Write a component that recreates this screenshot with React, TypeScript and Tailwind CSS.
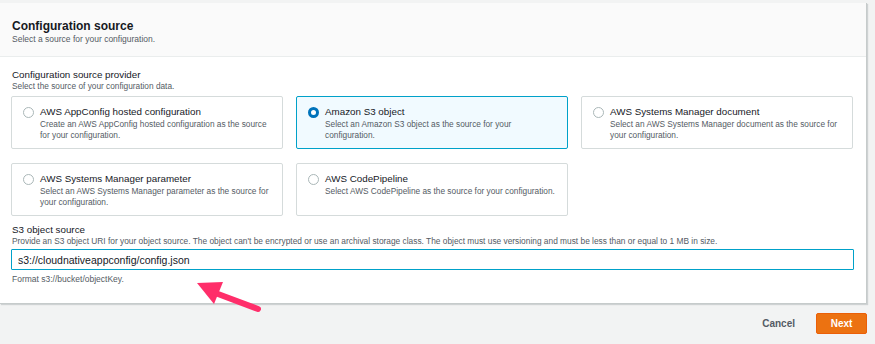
import React, { useState } from 'react';

const options = [
  { id: 'hosted', title: 'AWS AppConfig hosted configuration', desc: 'Create an AWS AppConfig hosted configuration as the source for your configuration.' },
  { id: 's3', title: 'Amazon S3 object', desc: 'Select an Amazon S3 object as the source for your configuration.' },
  { id: 'ssmdoc', title: 'AWS Systems Manager document', desc: 'Select an AWS Systems Manager document as the source for your configuration.' },
  { id: 'ssmparam', title: 'AWS Systems Manager parameter', desc: 'Select an AWS Systems Manager parameter as the source for your configuration.' },
  { id: 'pipeline', title: 'AWS CodePipeline', desc: 'Select AWS CodePipeline as the source for your configuration.' },
];

const App: React.FC = () => {
  const [selected, setSelected] = useState('s3');
  const [uri, setUri] = useState('s3://cloudnativeappconfig/config.json');

  return (
    <div className="relative w-[875px] h-[344px] overflow-hidden bg-[#f2f3f3] pt-[3px] font-['Liberation_Sans',Arial,sans-serif] text-[#16191f]">
      <div className="w-[867px] h-[301px] bg-white border-r border-b border-[#c6cbcb] shadow-[1px_1px_1px_rgba(0,28,36,0.15)]">
        <div className="h-[54px] bg-[#fafafa] border-b border-[#eaeded] px-[12px] pt-[16px]">
          <h1 className="text-[12px] leading-[14px] font-bold">Configuration source</h1>
          <p className="text-[8.5px] leading-[12px] text-[#545b64]">Select a source for your configuration.</p>
        </div>

        <div className="px-[11px] pt-[12px]">
          <div className="px-[1px] text-[9.8px] leading-[12px]">Configuration source provider</div>
          <div className="px-[1px] text-[8.3px] leading-[11px] text-[#545b64]">Select the source of your configuration data.</div>

          <div className="grid grid-cols-[272px_272px_272px] gap-x-[13px] gap-y-[14px] mt-[4px] w-[843px]">
            {options.map(o => {
              const on = selected === o.id;
              return (
                <div
                  key={o.id}
                  onClick={() => setSelected(o.id)}
                  className={`h-[53px] rounded-[2px] border flex gap-[6px] pl-[11px] pr-[8px] pt-[9px] cursor-pointer ${on ? 'bg-[#f1faff] border-[#00a1c9]' : 'bg-white border-[#d5dbdb]'}`}
                >
                  <div className={`mt-[1px] w-[11px] h-[11px] shrink-0 rounded-full ${on ? 'border-[3px] border-[#0073bb] bg-white' : 'border border-[#aab7b8] bg-white'}`} />
                  <div>
                    <div className="text-[9.8px] leading-[12px] text-[#16191f]">{o.title}</div>
                    <div className="text-[8.3px] leading-[10.5px] text-[#545b64] mt-[1px]">{o.desc}</div>
                  </div>
                </div>
              );
            })}
          </div>

          <div className="mt-[8px] px-[1px] text-[9.8px] leading-[12px]">S3 object source</div>
          <div className="px-[1px] text-[8.35px] leading-[11px] text-[#545b64]">
            Provide an S3 object URI for your object source. The object can't be encrypted or use an archival storage class. The object must use versioning and must be less than or equal to 1 MB in size.
          </div>
          <input
            value={uri}
            onChange={e => setUri(e.target.value)}
            className="mt-[2px] block w-[843px] h-[21px] border border-[#00a1c9] rounded-[1px] pl-[6px] text-[10.5px] text-[#16191f] outline-none"
          />
          <div className="mt-[4px] px-[1px] text-[8.5px] leading-[11px] text-[#545b64]">Format s3://bucket/objectKey.</div>
        </div>
      </div>

      <div className="flex justify-end items-center gap-[21px] pr-[8px] mt-[9px]">
        <button className="text-[10px] font-bold text-[#545b64]">Cancel</button>
        <button className="w-[51px] h-[21px] bg-[#ec7211] border border-[#eb5f07] rounded-[2px] text-[10px] font-bold text-white">Next</button>
      </div>

      <svg className="absolute left-[190px] top-[276px]" width="80" height="40" viewBox="190 276 80 40">
        <polygon points="197,283 223,282 214,304" fill="#ff2e6a" />
        <line x1="210" y1="291" x2="258" y2="309" stroke="#ff2e6a" strokeWidth="6" strokeLinecap="round" />
      </svg>
    </div>
  );
};

export default App;
